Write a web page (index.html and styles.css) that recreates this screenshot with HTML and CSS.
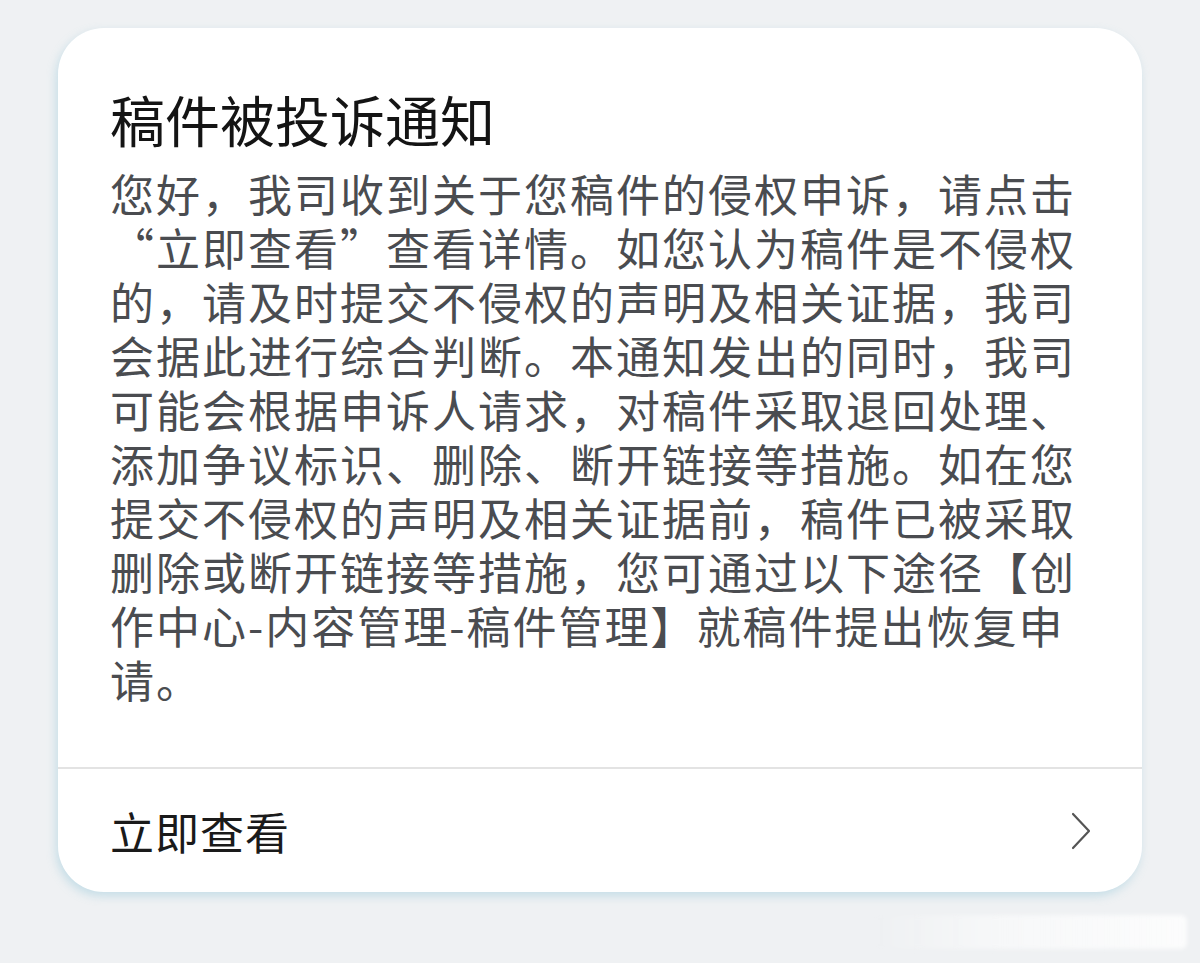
FILE: index.html
```html
<!DOCTYPE html>
<html lang="zh-CN">
<head>
    <meta charset="UTF-8">
    <meta name="viewport" content="width=device-width, initial-scale=1.0">
    <title>稿件被投诉通知</title>
    <link rel="stylesheet" href="styles.css">
</head>
<body>
    <div class="card">
        <div class="card-body">
            <h1 class="title">稿件被投诉通知</h1>
            <p class="content">您好，我司收到关于您稿件的侵权申诉，请点击<br>“立即查看”查看详情。如您认为稿件是不侵权<br>的，请及时提交不侵权的声明及相关证据，我司<br>会据此进行综合判断。本通知发出的同时，我司<br>可能会根据申诉人请求，对稿件采取退回处理、<br>添加争议标识、删除、断开链接等措施。如在您<br>提交不侵权的声明及相关证据前，稿件已被采取<br>删除或断开链接等措施，您可通过以下途径【创<br>作中心-内容管理-稿件管理】就稿件提出恢复申<br>请。</p>
        </div>
        <a class="action" href="#">
            <span>立即查看</span>
            <svg class="chevron" width="22" height="38" viewBox="0 0 22 38">
                <path d="M3 2 L19 19 L3 36" fill="none" stroke="#555" stroke-width="2.2" stroke-linecap="round" stroke-linejoin="round"/>
            </svg>
        </a>
    </div>
    <div class="watermark"></div>
</body>
</html>
```

FILE: styles.css
```css
body, html {
    margin: 0;
    padding: 0;
    height: 100%;
    background: #eff1f3;
    font-family: "Noto Sans CJK SC", "Noto Sans", sans-serif;
    overflow: hidden;
}
body {
    padding: 28px 0 0 58px;
    box-sizing: border-box;
    position: relative;
}
.card {
    width: 1084px;
    height: 864px;
    background: #fff;
    border-radius: 46px;
    box-shadow: -2px 4px 10px rgba(120, 185, 210, 0.35);
    display: flex;
    flex-direction: column;
    overflow: hidden;
}
.card-body {
    padding: 55px 52px 0 52px;
    flex: 1;
    border-bottom: 2px solid #e3e3e3;
}
.title {
    margin: 0 0 13px 0;
    font-size: 55px;
    line-height: 70px;
    font-weight: 400;
    color: #141414;
}
.content {
    margin: 0;
    font-size: 44px;
    line-height: 54px;
    letter-spacing: 2px;
    color: #4a4c50;
    white-space: nowrap;
}
.action {
    height: 123px;
    display: flex;
    align-items: center;
    justify-content: space-between;
    padding: 0 50px 0 52px;
    text-decoration: none;
    color: #1a1a1a;
    font-size: 44px;
    letter-spacing: 1px;
}
.chevron {
    display: block;
}
.watermark {
    position: absolute;
    left: 875px;
    top: 915px;
    width: 312px;
    height: 34px;
    border-radius: 6px;
    background: linear-gradient(90deg, rgba(255,255,255,0) 0%, rgba(255,255,255,0.5) 40%, rgba(255,255,255,0.8) 100%);
    filter: blur(2px);
}
```
